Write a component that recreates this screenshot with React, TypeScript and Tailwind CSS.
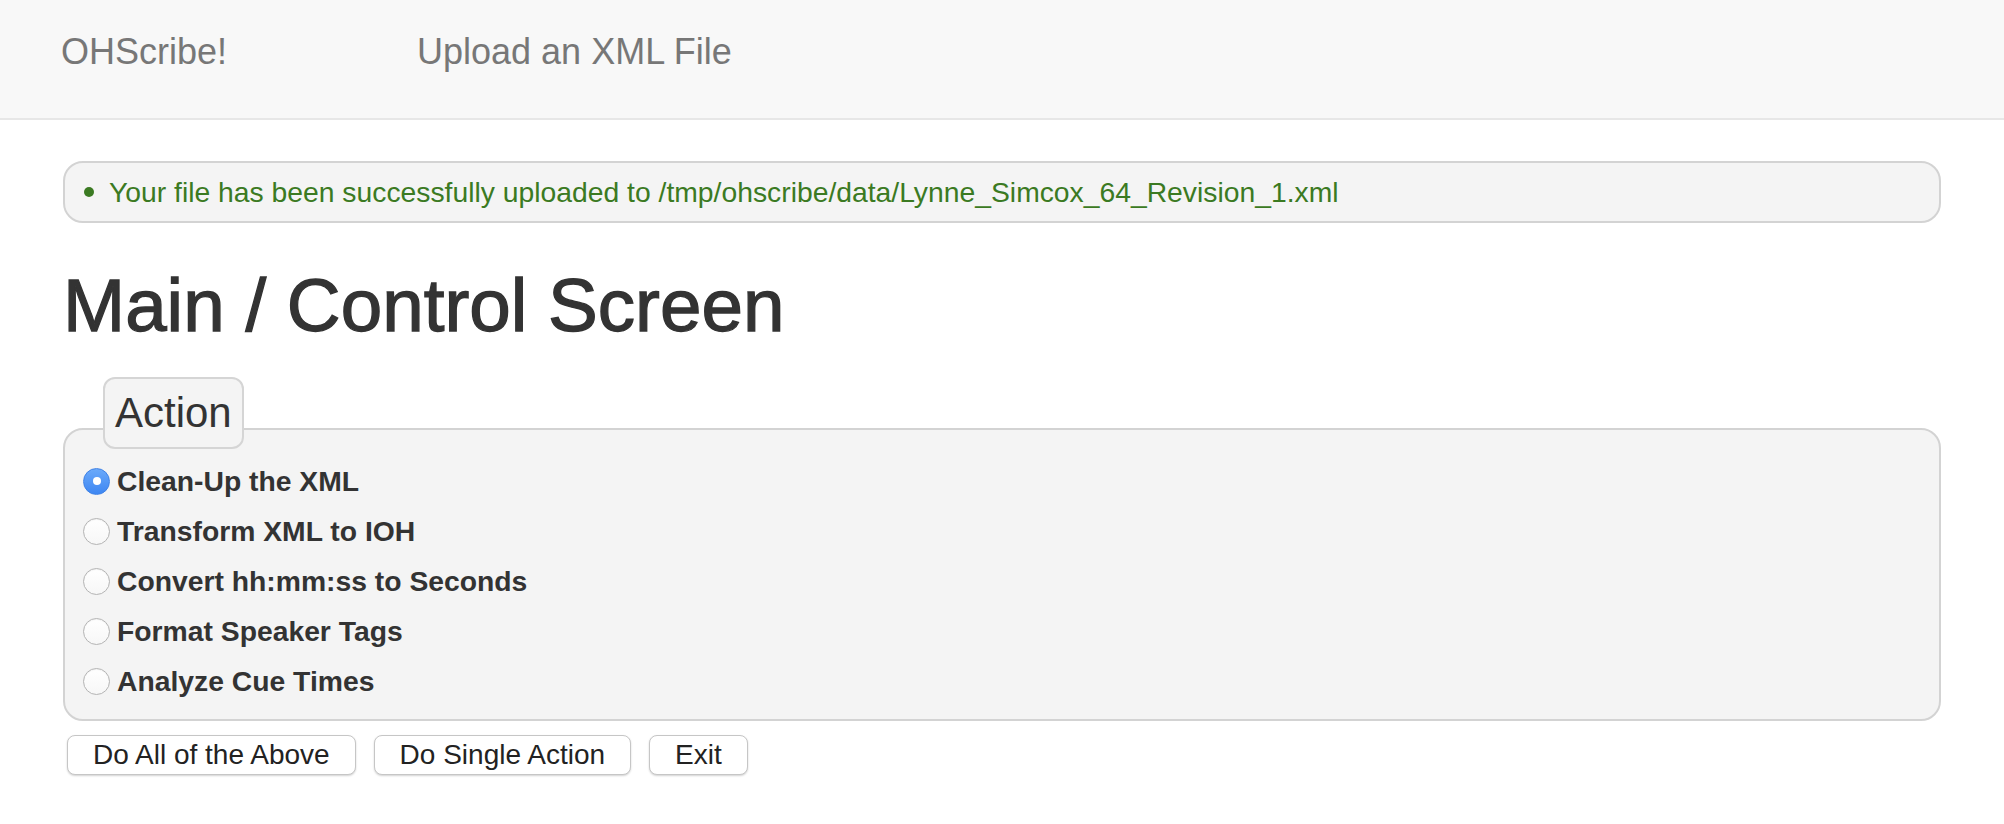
const ACTIONS = [
  "Clean-Up the XML",
  "Transform XML to IOH",
  "Convert hh:mm:ss to Seconds",
  "Format Speaker Tags",
  "Analyze Cue Times",
];

function Radio({ checked }: { checked: boolean }) {
  if (checked) {
    return (
      <span className="w-[27px] h-[27px] rounded-full bg-gradient-to-b from-[#6aa9fa] to-[#3d86f2] border border-[#3f82e6] flex items-center justify-center shrink-0">
        <span className="w-[8px] h-[8px] rounded-full bg-white" />
      </span>
    );
  }
  return (
    <span className="w-[27px] h-[27px] rounded-full bg-gradient-to-b from-white to-[#f7f7f7] border border-[#b4b4b4] shadow-[inset_0_1px_1px_rgba(0,0,0,0.05)] shrink-0" />
  );
}

export default function App() {
  return (
    <div className="min-h-screen bg-white font-['Liberation_Sans',Arial,sans-serif]">
      {/* Navbar */}
      <nav className="h-[120px] bg-[#f8f8f8] border-b-2 border-[#e7e7e7] flex items-start pt-[32px] pl-[61px]">
        <span className="w-[356px] text-[36px] leading-[40px] text-[#777]">OHScribe!</span>
        <span className="text-[36px] leading-[40px] text-[#777]">Upload an XML File</span>
      </nav>

      <main className="px-[63px]">
        {/* Upload message */}
        <div className="mt-[41px] h-[62px] border-2 border-[#d3d3d3] rounded-[20px] bg-[#f4f4f4] flex items-center pl-[19px]">
          <span className="w-[10px] h-[10px] rounded-full bg-[#3b7a22]" />
          <span className="ml-[15px] text-[28.3px] text-[#3b7a22]">
            Your file has been successfully uploaded to /tmp/ohscribe/data/Lynne_Simcox_64_Revision_1.xml
          </span>
        </div>

        <h1 className="mt-[42px] text-[74.6px] leading-[80px] text-[#333] [-webkit-text-stroke:1.3px_#333]">
          Main / Control Screen
        </h1>

        {/* Action fieldset */}
        <div className="mt-[32px] flex flex-col">
          <div className="relative z-10 ml-[40px] -mb-[21px] w-fit border-2 border-[#d5d5d5] rounded-[12px] bg-[#f4f4f4] px-[10px] py-[10px] text-[42px] leading-[48px] text-[#333]">
            Action
          </div>
          <div className="border-2 border-[#d3d3d3] rounded-[20px] bg-[#f4f4f4] pt-[26px] pb-[13px] pl-[18px]">
            {ACTIONS.map((label, idx) => (
              <label key={label} className="h-[50px] flex items-center">
                <Radio checked={idx === 0} />
                <span className="ml-[7px] text-[28.3px] font-bold text-[#333]">{label}</span>
              </label>
            ))}
          </div>
        </div>

        {/* Buttons */}
        <div className="mt-[14px] pl-[4px] flex gap-[18px]">
          {["Do All of the Above", "Do Single Action", "Exit"].map((b) => (
            <button
              key={b}
              className="h-[40px] px-[25px] text-[28px] leading-[38px] text-[#222] bg-white border border-[#c6c6c6] rounded-[8px] shadow-[0_1px_2px_rgba(0,0,0,0.18)]"
            >
              {b}
            </button>
          ))}
        </div>
      </main>
    </div>
  );
}
